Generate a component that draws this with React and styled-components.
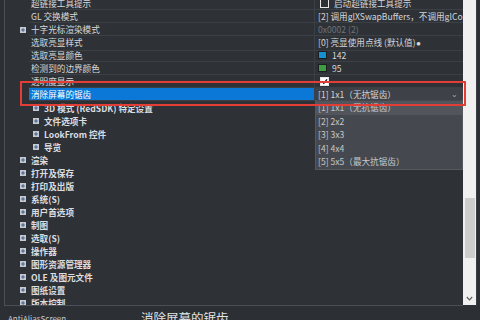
import React from 'react';
import styled, { createGlobalStyle } from 'styled-components';

const GlobalStyle = createGlobalStyle`
  html, body {
    margin: 0;
    padding: 0;
    background: #2c2f34;
    overflow: hidden;
  }
  * { box-sizing: border-box; }
`;

const Screen = styled.div`
  position: relative;
  width: 480px;
  height: 320px;
  overflow: hidden;
  background: #2c2f34;
  display: flex;
  flex-direction: column;
  font-family: "Noto Sans CJK SC", "Noto Sans", sans-serif;
  font-size: 8.6px;
  color: #d8d9db;
`;

const Top = styled.div`
  display: flex;
  flex: none;
  height: 306px;
  padding-left: 4px;
`;

const Panel = styled.div`
  flex: 1;
  border-left: 1px solid #4b4f56;
  border-bottom: 1px solid #4b4f56;
  overflow: hidden;
  background: #2e3237;
`;

const Tree = styled.div`
  margin-top: -3px;
`;

const PropRow = styled.div`
  display: grid;
  grid-template-columns: 24px 286px 1fr;
  height: 13px;
`;

const Gutter = styled.div`
  display: flex;
  align-items: center;
  padding-left: 15px;
`;

const NameCell = styled.div`
  padding-left: 2px;
  line-height: 12px;
  white-space: nowrap;
  overflow: hidden;
  border-bottom: 1px solid #3b3f46;
  border-right: 1px solid #3b3f46;
  background: ${p => (p.$selected ? '#0b77d6' : 'transparent')};
  color: ${p => (p.$selected ? '#ffffff' : '#d8d9db')};
`;

const ValueCell = styled.div`
  position: relative;
  display: flex;
  align-items: center;
  gap: 5px;
  padding-left: 3px;
  padding-right: 5px;
  line-height: 12px;
  white-space: nowrap;
  border-bottom: 1px solid #3b3f46;
  background: ${p => (p.$selected ? '#3e4147' : 'transparent')};
  color: ${p => (p.$dim ? '#6d7177' : '#d4d5d7')};
`;

const ValueText = styled.span`
  flex: 1;
  overflow: hidden;
`;

const Marker = styled.span`
  font-size: 4px;
  vertical-align: middle;
  margin-left: 1px;
`;

const Chevron = styled.span`
  color: #a8abb0;
  font-size: 8px;
`;

const Checkbox = styled.span`
  width: 9px;
  height: 9px;
  margin-left: 2px;
  flex: none;
  border: 1px solid #e8e8e8;
  background: ${p => (p.$checked ? '#ffffff' : 'transparent')};
  display: flex;
  align-items: center;
  justify-content: center;
`;

const Swatch = styled.span`
  width: 9px;
  height: 8px;
  flex: none;
  border: 1px solid #1b1d20;
  background: ${p => p.$color};
`;

const CatRow = styled.div`
  display: flex;
  align-items: center;
  gap: 5px;
  height: 13px;
  padding-left: ${p => (p.$level === 1 ? 28 : 15)}px;
  font-weight: 700;
  color: #dcdde0;
  white-space: nowrap;
`;

const DropList = styled.div`
  position: absolute;
  left: 0;
  top: 100%;
  width: 100%;
  z-index: 2;
  padding-top: 1px;
  background: #45494f;
  border: 1px solid #55595f;
  border-top: none;
`;

const DropItem = styled.div`
  height: 13.5px;
  line-height: 13.5px;
  padding-left: 2px;
  color: #c4c6c9;
  background: ${p => (p.$active ? '#52565c' : 'transparent')};
`;

const Scrollbar = styled.div`
  width: 13px;
  height: 305px;
  background: #f0f0f0;
  display: flex;
  flex-direction: column;
  align-items: center;
`;

const Thumb = styled.div`
  width: 10px;
  height: 60px;
  background: #cdcdcd;
`;

const ArrowDown = styled.div`
  margin-top: auto;
  margin-bottom: 4px;
  display: flex;
`;

const Strip = styled.div`
  width: 4px;
  border-left: 1px solid #3a3d43;
`;

const Description = styled.div`
  display: flex;
  flex: none;
  height: 24px;
  padding-left: 8px;
`;

const DescCode = styled.div`
  width: 133px;
  padding-top: 8px;
  font-size: 8px;
  line-height: 10px;
  color: #c8cacd;
`;

const DescTitle = styled.div`
  padding-top: 4px;
  font-size: 12.5px;
  line-height: 15px;
  color: #e2e3e5;
`;

const Annotation = styled.div`
  position: absolute;
  left: 20px;
  top: 81px;
  width: 446px;
  height: 25px;
  border: 2px solid #e23d37;
  z-index: 3;
  pointer-events: none;
`;

const ExpandIcon = () => (
  <svg width="6" height="6" viewBox="0 0 6 6" style={{ flex: 'none' }}>
    <rect x="0" y="0" width="6" height="6" fill="#c5c9d0" />
    <path d="M3 1.2V4.8M1.2 3H4.8" stroke="#3d5c8f" strokeWidth="1" />
  </svg>
);

const CheckMark = () => (
  <svg width="7" height="7" viewBox="0 0 7 7">
    <path d="M1 3.6L2.8 5.3L6 1.4" stroke="#111" strokeWidth="1.3" fill="none" />
  </svg>
);

const properties = [
  { name: '超链接工具提示', checkbox: false, value: '启动超链接工具提示' },
  { name: 'GL 交换模式', value: '[2] 调用glXSwapBuffers，不调用glCopyPixels' },
  { name: '十字光标渲染模式', expandable: true, value: '0x0002 (2)', dim: true },
  { name: '选取亮显样式', value: '[0] 亮显使用点线 (默认值)', marker: true },
  { name: '选取亮显颜色', swatch: '#1590d1', value: '142' },
  { name: '检测到的边界颜色', swatch: '#3e9b40', value: '95' },
  { name: '透明度显示', checkbox: true },
  { name: '消除屏幕的锯齿', selected: true, value: '[1] 1x1（无抗锯齿）' },
];

const options = [
  '[1] 1x1（无抗锯齿）',
  '[2] 2x2',
  '[3] 3x3',
  '[4] 4x4',
  '[5] 5x5（最大抗锯齿）',
];

const categories = [
  { label: '3D 模式 (RedSDK) 特定设置', level: 1 },
  { label: '文件选项卡', level: 1 },
  { label: 'LookFrom 控件', level: 1 },
  { label: '导览', level: 1 },
  { label: '渲染' },
  { label: '打开及保存' },
  { label: '打印及出版' },
  { label: '系统(S)' },
  { label: '用户首选项' },
  { label: '制图' },
  { label: '选取(S)' },
  { label: '操作器' },
  { label: '图形资源管理器' },
  { label: 'OLE 及图元文件' },
  { label: '图纸设置' },
  { label: '版本控制' },
];

const PropertyRow = ({ prop }) => (
  <PropRow>
    <Gutter>{prop.expandable && <ExpandIcon />}</Gutter>
    <NameCell $selected={prop.selected}>{prop.name}</NameCell>
    <ValueCell $selected={prop.selected} $dim={prop.dim}>
      {prop.checkbox !== undefined && (
        <Checkbox $checked={prop.checkbox}>{prop.checkbox && <CheckMark />}</Checkbox>
      )}
      {prop.swatch && <Swatch $color={prop.swatch} />}
      {prop.value && (
        <ValueText>
          {prop.value}
          {prop.marker && <Marker>●</Marker>}
        </ValueText>
      )}
      {prop.selected && <Chevron>⌄</Chevron>}
      {prop.selected && (
        <DropList>
          {options.map((o, i) => (
            <DropItem key={o} $active={i === 0}>{o}</DropItem>
          ))}
        </DropList>
      )}
    </ValueCell>
  </PropRow>
);

export default function App() {
  return (
    <Screen>
      <GlobalStyle />
      <Top>
        <Panel>
          <Tree>
            {properties.map(p => (
              <PropertyRow key={p.name} prop={p} />
            ))}
            {categories.map(c => (
              <CatRow key={c.label} $level={c.level}>
                <ExpandIcon />
                {c.label}
              </CatRow>
            ))}
          </Tree>
        </Panel>
        <Scrollbar>
          <Thumb style={{ marginTop: 198 }} />
          <ArrowDown>
            <svg width="7" height="5" viewBox="0 0 7 5">
              <path d="M0.8 1L3.5 3.8L6.2 1" stroke="#606060" strokeWidth="1.2" fill="none" />
            </svg>
          </ArrowDown>
        </Scrollbar>
        <Strip />
      </Top>
      <Description>
        <DescCode>AntiAliasScreen</DescCode>
        <DescTitle>消除屏幕的锯齿</DescTitle>
      </Description>
      <Annotation />
    </Screen>
  );
}
